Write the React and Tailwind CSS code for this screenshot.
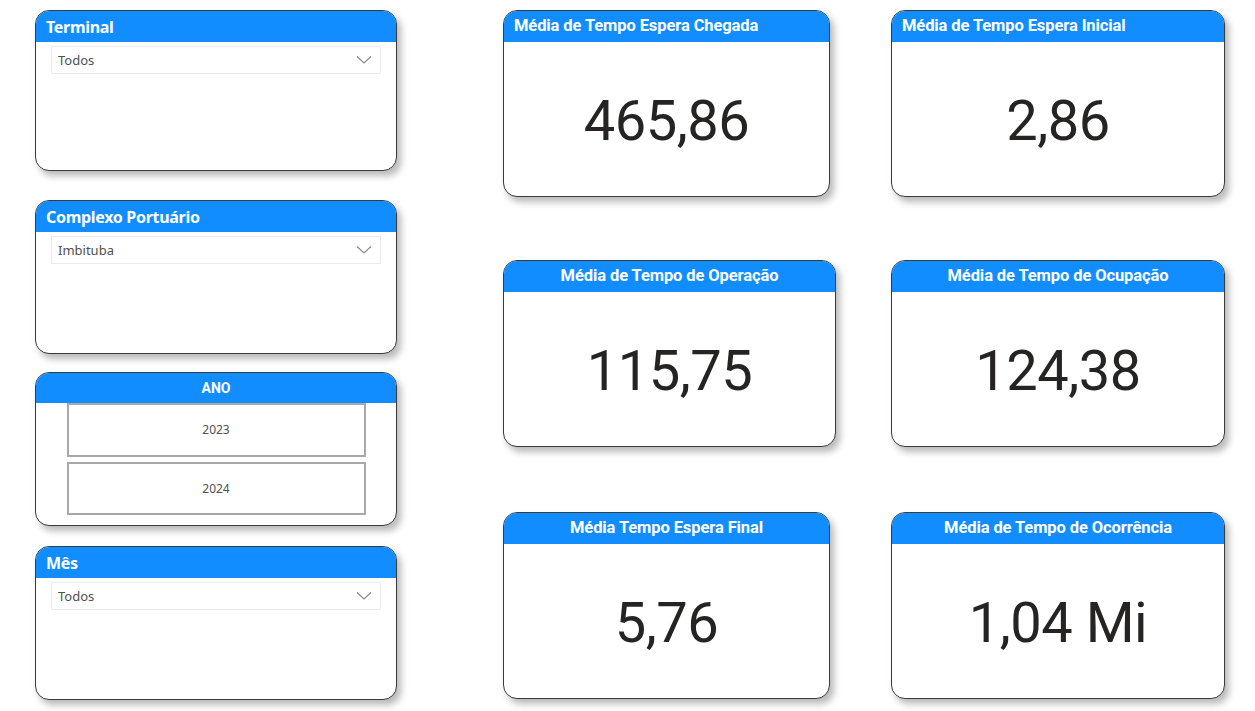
import React from "react";

const Chevron = () => (
  <svg width="16" height="10" viewBox="0 0 16 10" fill="none">
    <path d="M1 1.5 L8 8 L15 1.5" stroke="#8a8a8a" strokeWidth="1.1" />
  </svg>
);

function Card({ className = "", children }) {
  return (
    <div
      className={
        "bg-white border border-[#3a3a3a] rounded-[14px] overflow-hidden shadow-[4px_5px_7px_rgba(0,0,0,0.28)] flex flex-col " +
        className
      }
    >
      {children}
    </div>
  );
}

function DropSlicer({ title, value, className }) {
  return (
    <Card className={className}>
      <div className="h-[31px] bg-[#118DFF] flex items-center pl-[10px] shrink-0">
        <span className="text-white text-[16px] font-bold leading-none [font-family:'Noto_Sans',sans-serif] tracking-[-0.3px]">
          {title}
        </span>
      </div>
      <div className="mx-[15px] mt-[4px] h-[28px] border border-[#ececec] flex items-center justify-between pl-[6px] pr-[8px]">
        <span className="text-[13px] text-[#505050] [font-family:'Noto_Sans',sans-serif] pt-[2px]">{value}</span>
        <Chevron />
      </div>
    </Card>
  );
}

function Kpi({ title, value, align = "center", className }) {
  return (
    <Card className={className}>
      <div
        className={
          "h-[31px] bg-[#118DFF] flex items-center shrink-0 " +
          (align === "left" ? "justify-start pl-[10px]" : "justify-center")
        }
      >
        <span className="text-white text-[16.5px] font-bold leading-none [font-family:'Roboto',sans-serif] tracking-[-0.1px]">
          {title}
        </span>
      </div>
      <div className="flex-1 flex items-center justify-center pt-[4px]">
        <span className="text-[56px] leading-none text-[#252423] [font-family:'Roboto',sans-serif] tracking-[-0.5px]">
          {value}
        </span>
      </div>
    </Card>
  );
}

export default function App() {
  return (
    <div className="w-[1255px] h-[711px] bg-white flex overflow-hidden">
      <div className="ml-[35px] mt-[10px] w-[362px] flex flex-col">
        <DropSlicer title="Terminal" value="Todos" className="h-[161px]" />
        <DropSlicer title="Complexo Portuário" value="Imbituba" className="h-[154px] mt-[29px]" />
        <Card className="h-[154px] mt-[18px]">
          <div className="h-[30px] bg-[#118DFF] flex items-center justify-center shrink-0">
            <span className="text-white text-[14px] font-bold leading-none [font-family:'Roboto',sans-serif]">
              ANO
            </span>
          </div>
          <div className="flex flex-col items-center gap-[5px]">
            <div className="w-[299px] h-[54px] border-2 border-[#a8a8a8] flex items-center justify-center">
              <span className="text-[12px] text-[#505050] [font-family:'Noto_Sans',sans-serif]">2023</span>
            </div>
            <div className="w-[299px] h-[53px] border-2 border-[#a8a8a8] flex items-center justify-center">
              <span className="text-[12px] text-[#505050] [font-family:'Noto_Sans',sans-serif]">2024</span>
            </div>
          </div>
        </Card>
        <DropSlicer title="Mês" value="Todos" className="h-[154px] mt-[20px]" />
      </div>

      <div className="ml-[106px] mt-[10px] flex gap-[55px]">
        <div className="flex flex-col">
          <Kpi title="Média de Tempo Espera Chegada" value="465,86" align="left" className="w-[327px] h-[187px]" />
          <Kpi title="Média de Tempo de Operação" value="115,75" className="w-[333px] h-[187px] mt-[63px]" />
          <Kpi title="Média Tempo Espera Final" value="5,76" className="w-[327px] h-[187px] mt-[65px]" />
        </div>
        <div className="flex flex-col">
          <Kpi title="Média de Tempo Espera Inicial" value="2,86" align="left" className="w-[334px] h-[187px]" />
          <Kpi title="Média de Tempo de Ocupação" value="124,38" className="w-[334px] h-[187px] mt-[63px]" />
          <Kpi title="Média de Tempo de Ocorrência" value="1,04 Mi" className="w-[334px] h-[187px] mt-[65px]" />
        </div>
      </div>
    </div>
  );
}
